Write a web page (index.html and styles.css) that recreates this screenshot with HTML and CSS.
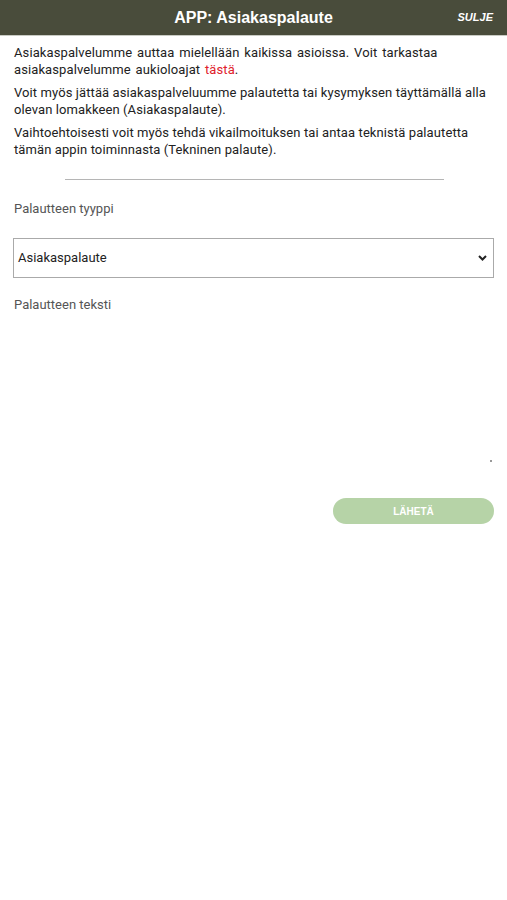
FILE: index.html
```html
<!DOCTYPE html>
<html lang="fi">
<head>
<meta charset="utf-8">
<title>APP: Asiakaspalaute</title>
<link rel="stylesheet" href="styles.css">
</head>
<body>
<header class="topbar">
  <h1 class="title">APP: Asiakaspalaute</h1>
  <a class="close">SULJE</a>
</header>
<main class="content">
  <p class="intro">Asiakaspalvelumme auttaa mielellään kaikissa asioissa. Voit tarkastaa asiakaspalvelumme aukioloajat <a class="link">tästä</a>.</p>
  <p>Voit myös jättää asiakaspalveluumme palautetta tai kysymyksen täyttämällä alla olevan lomakkeen (Asiakaspalaute).</p>
  <p>Vaihtoehtoisesti voit myös tehdä vikailmoituksen tai antaa teknistä palautetta tämän appin toiminnasta (Tekninen palaute).</p>
  <hr class="divider">
  <label class="label">Palautteen tyyppi</label>
  <div class="select">
    <span>Asiakaspalaute</span>
    <svg class="chev" width="9" height="6" viewBox="0 0 9 6"><path d="M1 1 L4.5 4.5 L8 1" fill="none" stroke="#222" stroke-width="2"/></svg>
  </div>
  <label class="label label2">Palautteen teksti</label>
  <div class="textarea"><span class="grip"></span></div>
  <div class="actions"><button class="send">LÄHETÄ</button></div>
</main>
</body>
</html>
```
FILE: styles.css
```css
html, body { margin: 0; padding: 0; background: #fff; }
body { font-family: Roboto, "Noto Sans", sans-serif; color: #222; }
.topbar {
  height: 35px;
  background: #494c3b;
  border-bottom: 1px solid #c9cbc4;
  display: flex;
  align-items: center;
  justify-content: center;
  position: relative;
}
.title {
  margin: 0;
  font-family: "Liberation Sans", Arial, sans-serif;
  font-weight: bold;
  font-size: 16px;
  color: #fff;
}
.close {
  position: absolute;
  right: 14px;
  top: 11px;
  font-family: "Liberation Sans", Arial, sans-serif;
  font-weight: bold;
  font-style: italic;
  font-size: 11px;
  color: #fff;
}
.content { padding: 9px 13px 0 14px; }
.content p {
  margin: 0 0 7px;
  font-size: 13px;
  line-height: 16.5px;
  letter-spacing: 0.1px;
}
.content p.intro { word-spacing: 1.5px; }
.link { color: #e0212b; }
.divider {
  width: 379px;
  border: 0;
  border-top: 1px solid #b5b5b5;
  margin: 21px auto 21px;
}
.label {
  display: block;
  font-size: 13px;
  color: #555;
  line-height: 16px;
}
.select {
  margin: 21px 0 0 -1px;
  height: 38px;
  border: 1px solid #aaa;
  display: flex;
  align-items: center;
  justify-content: space-between;
  padding: 0 6px 0 4px;
  font-size: 13px;
  color: #222;
}
.select span { position: relative; top: -1px; }
.chev { display: block; }
.label2 { margin-top: 19px; }
.textarea {
  height: 152px;
  position: relative;
}
.grip {
  position: absolute;
  right: 2px;
  bottom: 3px;
  width: 2px;
  height: 2px;
  background: #999;
}
.actions {
  display: flex;
  justify-content: flex-end;
  margin-top: 33px;
}
.send {
  width: 161px;
  height: 26px;
  border: 0;
  border-radius: 13px;
  background: #b6d3a7;
  color: #fff;
  font-family: "Liberation Sans", Arial, sans-serif;
  font-weight: bold;
  font-size: 10px;
  padding: 0;
}
```
